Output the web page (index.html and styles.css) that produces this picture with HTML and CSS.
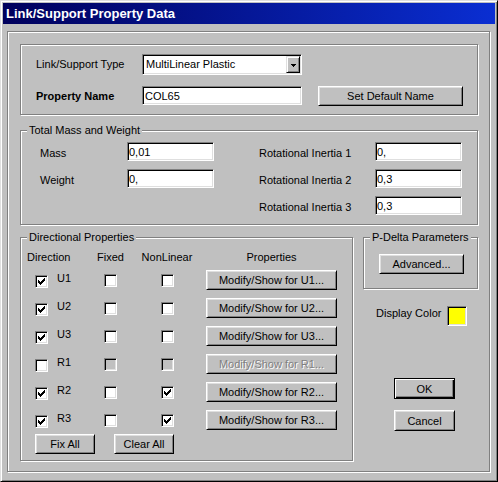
FILE: index.html
```html
<!DOCTYPE html>
<html lang="en">
<head>
  <meta charset="UTF-8" />
  <title>Link/Support Property Data</title>
  <link rel="stylesheet" href="styles.css">
</head>
<body>
  <div class="window">
    <div class="titlebar">Link/Support Property Data</div>

    <div class="frame">
      <!-- type and name -->
      <div class="group group-top">
        <div class="top-grid">
          <span class="lbl">Link/Support Type</span>
          <div class="combo">
            <span class="combo-text">MultiLinear Plastic</span>
            <span class="combo-btn">
              <svg width="5" height="3" viewBox="0 0 5 3"><path d="M0 0h5v1h-1v1h-1v1h-1v-1h-1v-1h-1z" fill="#000"/></svg>
            </span>
          </div>
          <span></span>
          <span class="lbl bold">Property Name</span>
          <input class="field field-name" type="text" value="COL65" />
          <button class="btn btn-default-name">Set Default Name</button>
        </div>
      </div>

      <!-- mass -->
      <div class="group group-mass">
        <span class="legend">Total Mass and Weight</span>
        <div class="mass-body">
          <div class="mass-col mass-left">
            <span class="mlbl">Mass</span><input class="field num" type="text" value="0,01" />
            <span class="mlbl">Weight</span><input class="field num" type="text" value="0," />
          </div>
          <div class="mass-col mass-right">
            <span class="mlbl">Rotational Inertia 1</span><input class="field num" type="text" value="0," />
            <span class="mlbl">Rotational Inertia 2</span><input class="field num" type="text" value="0,3" />
            <span class="mlbl">Rotational Inertia 3</span><input class="field num" type="text" value="0,3" />
          </div>
        </div>
      </div>

      <div class="lower">
        <!-- directional properties -->
        <div class="group group-dir">
          <span class="legend">Directional Properties</span>
          <div class="dir-grid">
            <span class="hdr">Direction</span>
            <span class="hdr hdr-center">Fixed</span>
            <span class="hdr hdr-center">NonLinear</span>
            <span class="hdr hdr-props">Properties</span>

            <div class="dir-cell"><span class="cb"><svg class="tick" width="11" height="11" viewBox="1 1 11 11"><path d="M3 5h1v1h1v1h1v-1h1v-1h1v-1h1v-1h1v3h-1v1h-1v1h-1v1h-1v1h-1v-1h-1v-1h-1z"/></svg></span><span class="dir-name">U1</span></div>
            <span class="cb"></span>
            <span class="cb"></span>
            <button class="btn btn-modify">Modify/Show for U1...</button>

            <div class="dir-cell"><span class="cb"><svg class="tick" width="11" height="11" viewBox="1 1 11 11"><path d="M3 5h1v1h1v1h1v-1h1v-1h1v-1h1v-1h1v3h-1v1h-1v1h-1v1h-1v1h-1v-1h-1v-1h-1z"/></svg></span><span class="dir-name">U2</span></div>
            <span class="cb"></span>
            <span class="cb"></span>
            <button class="btn btn-modify">Modify/Show for U2...</button>

            <div class="dir-cell"><span class="cb"><svg class="tick" width="11" height="11" viewBox="1 1 11 11"><path d="M3 5h1v1h1v1h1v-1h1v-1h1v-1h1v-1h1v3h-1v1h-1v1h-1v1h-1v1h-1v-1h-1v-1h-1z"/></svg></span><span class="dir-name">U3</span></div>
            <span class="cb"></span>
            <span class="cb"></span>
            <button class="btn btn-modify">Modify/Show for U3...</button>

            <div class="dir-cell"><span class="cb"></span><span class="dir-name">R1</span></div>
            <span class="cb cb-disabled"></span>
            <span class="cb cb-disabled"></span>
            <button class="btn btn-modify" disabled>Modify/Show for R1...</button>

            <div class="dir-cell"><span class="cb"><svg class="tick" width="11" height="11" viewBox="1 1 11 11"><path d="M3 5h1v1h1v1h1v-1h1v-1h1v-1h1v-1h1v3h-1v1h-1v1h-1v1h-1v1h-1v-1h-1v-1h-1z"/></svg></span><span class="dir-name">R2</span></div>
            <span class="cb"></span>
            <span class="cb"><svg class="tick" width="11" height="11" viewBox="1 1 11 11"><path d="M3 5h1v1h1v1h1v-1h1v-1h1v-1h1v-1h1v3h-1v1h-1v1h-1v1h-1v1h-1v-1h-1v-1h-1z"/></svg></span>
            <button class="btn btn-modify">Modify/Show for R2...</button>

            <div class="dir-cell"><span class="cb"><svg class="tick" width="11" height="11" viewBox="1 1 11 11"><path d="M3 5h1v1h1v1h1v-1h1v-1h1v-1h1v-1h1v3h-1v1h-1v1h-1v1h-1v1h-1v-1h-1v-1h-1z"/></svg></span><span class="dir-name">R3</span></div>
            <span class="cb"></span>
            <span class="cb"><svg class="tick" width="11" height="11" viewBox="1 1 11 11"><path d="M3 5h1v1h1v1h1v-1h1v-1h1v-1h1v-1h1v3h-1v1h-1v1h-1v1h-1v1h-1v-1h-1v-1h-1z"/></svg></span>
            <button class="btn btn-modify">Modify/Show for R3...</button>
          </div>
          <div class="dir-actions">
            <button class="btn btn-small">Fix All</button>
            <button class="btn btn-small">Clear All</button>
          </div>
        </div>

        <!-- right column -->
        <div class="side">
          <div class="group group-pdelta">
            <span class="legend">P-Delta Parameters</span>
            <button class="btn btn-advanced">Advanced...</button>
          </div>
          <div class="color-row">
            <span class="color-lbl">Display Color</span>
            <span class="swatch"></span>
          </div>
          <button class="btn btn-dialog btn-default">OK</button>
          <button class="btn btn-dialog btn-cancel">Cancel</button>
        </div>
      </div>
    </div>
  </div>
</body>
</html>
```

FILE: styles.css
```css
* {
  box-sizing: border-box;
}

body {
  margin: 0;
  background: #c0c0c0;
  font-family: "Liberation Sans", Arial, sans-serif;
  font-size: 11px;
  color: #000;
}

/* window chrome */
.window {
  width: 498px;
  height: 482px;
  padding: 2px;
  border: 1px solid;
  border-color: #dfdfdf #000 #000 #dfdfdf;
  box-shadow: inset 1px 1px #fff, inset -1px -1px #808080;
  background: #c0c0c0;
}

.titlebar {
  height: 21px;
  padding-left: 3px;
  background: linear-gradient(to right, #00005c, #0a2ed2);
  color: #fff;
  font-weight: bold;
  font-size: 13px;
  line-height: 21px;
  white-space: nowrap;
}

/* etched group boxes */
.frame,
.group {
  border: 1px solid #808080;
  box-shadow: inset 1px 1px #fff, 1px 1px #fff;
}

.frame {
  width: 483px;
  height: 441px;
  margin: 7px 0 0 4px;
  padding: 12px 0 0 12px;
}

.legend {
  display: block;
  width: fit-content;
  margin: -7px 0 0 6px;
  padding: 0 2px;
  background: #c0c0c0;
  line-height: 13px;
  white-space: nowrap;
}

/* controls */
.btn {
  display: block;
  margin: 0;
  padding: 0;
  height: 20px;
  border: 1px solid;
  border-color: #fff #000 #000 #fff;
  box-shadow: inset 1px 1px #dfdfdf, inset -1px -1px #808080;
  background: #c0c0c0;
  font-family: inherit;
  font-size: 11px;
  color: #000;
  white-space: nowrap;
}

.btn:disabled {
  color: #808080;
  text-shadow: 1px 1px 0 #fff;
}

.field {
  display: block;
  margin: 0;
  height: 19px;
  padding: 0 2px;
  border: 1px solid;
  border-color: #808080 #fff #fff #808080;
  box-shadow: inset 1px 1px #000, inset -1px -1px #dfdfdf;
  background: #fff;
  font-family: inherit;
  font-size: 11px;
  color: #000;
  outline: none;
  appearance: none;
}

.field.num {
  width: 87px;
  padding: 0 1px;
}

.cb {
  display: block;
  width: 13px;
  height: 13px;
  border: 1px solid;
  border-color: #808080 #fff #fff #808080;
  box-shadow: inset 1px 1px #000, inset -1px -1px #dfdfdf;
  background: #fff;
  justify-self: center;
  align-self: center;
}

.cb-disabled {
  background: #c0c0c0;
}

.tick {
  display: block;
  fill: #000;
  shape-rendering: crispEdges;
}

/* top group */
.group-top {
  width: 458px;
  height: 71px;
  padding: 9px 0 0 15px;
}

.top-grid {
  display: grid;
  grid-template-columns: 106px 176px 145px;
  grid-template-rows: 21px 20px;
  row-gap: 11px;
}

.lbl {
  align-self: center;
  line-height: 13px;
  white-space: nowrap;
}

.bold {
  font-weight: bold;
}

.combo {
  display: flex;
  width: 160px;
  padding: 2px;
  border: 1px solid;
  border-color: #808080 #fff #fff #808080;
  box-shadow: inset 1px 1px #000, inset -1px -1px #dfdfdf;
  background: #fff;
}

.combo-text {
  flex: 1;
  padding-left: 1px;
  line-height: 15px;
}

.combo-btn {
  display: flex;
  align-items: center;
  justify-content: center;
  width: 14px;
  height: 17px;
  margin: -1px -1px 0 0;
  border: 1px solid;
  border-color: #dfdfdf #000 #000 #dfdfdf;
  box-shadow: inset 1px 1px #fff, inset -1px -1px #808080;
  background: #c0c0c0;
}

.combo-btn svg {
  display: block;
  margin-top: 1px;
}

.field-name {
  width: 160px;
  align-self: start;
}

.btn-default-name {
  width: 145px;
}

/* mass group */
.group-mass {
  width: 458px;
  height: 95px;
  margin-top: 15px;
}

.mass-body {
  display: flex;
  gap: 45px;
  padding: 5px 0 0 19px;
}

.mass-col {
  display: grid;
  grid-auto-rows: 19px;
  row-gap: 8px;
}

.mass-left {
  grid-template-columns: 87px 87px;
}

.mass-right {
  grid-template-columns: 116px 87px;
}

.mlbl {
  padding-top: 4px;
  line-height: 15px;
  white-space: nowrap;
}

/* lower area */
.lower {
  display: flex;
  gap: 10px;
  margin-top: 12px;
}

.group-dir {
  width: 333px;
  height: 224px;
}

.dir-grid {
  display: grid;
  grid-template-columns: 59px 49px 64px 138px;
  grid-template-rows: 11px repeat(6, 20px);
  row-gap: 8px;
  padding: 7px 0 0 6px;
}

.hdr {
  line-height: 13px;
  white-space: nowrap;
}

.hdr-center {
  justify-self: center;
}

.hdr-props {
  justify-self: end;
  width: 131px;
  text-align: center;
}

.dir-cell {
  display: flex;
  align-items: flex-start;
  padding-left: 8px;
}

.dir-cell .cb {
  margin-top: 3px;
}

.dir-name {
  margin-left: 9px;
  line-height: 17px;
}

.btn-modify {
  width: 131px;
  justify-self: end;
}

.dir-actions {
  display: flex;
  gap: 19px;
  margin-top: 4px;
  padding-left: 14px;
}

.btn-small {
  width: 60px;
}

/* right side */
.side {
  display: flex;
  flex-direction: column;
  width: 115px;
}

.group-pdelta {
  height: 52px;
}

.btn-advanced {
  width: 85px;
  margin: 10px 0 0 15px;
}

.color-row {
  display: flex;
  justify-content: space-between;
  height: 20px;
  margin-top: 17px;
  padding: 0 11px 0 13px;
}

.color-lbl {
  margin-top: 1px;
  line-height: 13px;
}

.swatch {
  width: 20px;
  height: 20px;
  border: 1px solid;
  border-color: #808080 #fff #fff #808080;
  box-shadow: inset 1px 1px #000, inset -1px -1px #dfdfdf;
  background: #ffff00;
}

.btn-dialog {
  width: 61px;
  height: 21px;
  margin-left: 31px;
}

.btn-default {
  margin-top: 52px;
  border-color: #000;
  box-shadow: inset 1px 1px #fff, inset -1px -1px #000, inset -2px -2px #808080;
}

.btn-cancel {
  margin-top: 11px;
}
```
